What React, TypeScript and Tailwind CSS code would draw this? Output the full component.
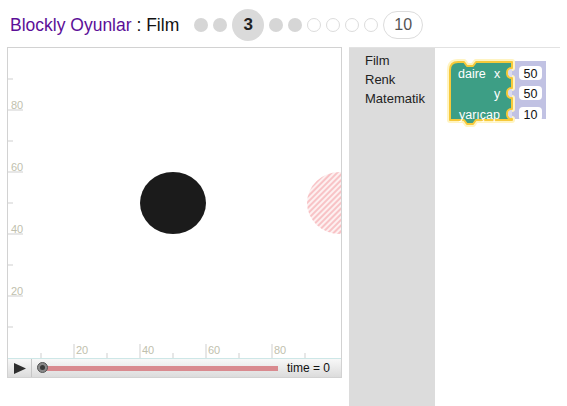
import React from 'react'

const W = 333
const H = 310
const ux = (v: number) => v * 3.3
const uy = (v: number) => H - v * 3.1
const ticks = [10, 20, 30, 40, 50, 60, 70, 80, 90]

// sol üstteki seviye noktaları
function LevelDots() {
  const dot = 'w-[14px] h-[14px] rounded-full'
  return (
    <div className="flex items-center gap-[5px] ml-[15px]">
      <span className={`${dot} bg-[#d6d6d6]`} />
      <span className={`${dot} bg-[#d6d6d6]`} />
      <span className="w-[32px] h-[32px] rounded-full bg-[#dadada] flex items-center justify-center text-[17px] font-bold text-[#222]">
        3
      </span>
      <span className={`${dot} bg-[#d6d6d6]`} />
      <span className={`${dot} bg-[#d6d6d6]`} />
      <span className={`${dot} border border-[#dcdcdc]`} />
      <span className={`${dot} border border-[#dcdcdc]`} />
      <span className={`${dot} border border-[#dcdcdc]`} />
      <span className={`${dot} border border-[#dcdcdc]`} />
      <span className="w-[40px] h-[28px] rounded-full border border-[#dcdcdc] flex items-center justify-center text-[16px] text-[#555]">
        10
      </span>
    </div>
  )
}

function Canvas() {
  return (
    <svg width={W} height={H} className="block overflow-hidden">
      <defs>
        <pattern id="hatch" width="4" height="4" patternUnits="userSpaceOnUse" patternTransform="rotate(45)">
          <rect width="4" height="4" fill="#fdf0f0" />
          <rect width="2" height="4" fill="#f8c3c6" />
        </pattern>
      </defs>
      {/* hedef daire */}
      <ellipse cx={332} cy={155} rx={33} ry={31} fill="url(#hatch)" />
      {/* y ekseni */}
      {ticks.map((v) =>
        v % 20 === 0 ? (
          <g key={'y' + v}>
            <line x1={0} x2={15} y1={uy(v)} y2={uy(v)} stroke="#cfcfcf" strokeWidth={1} />
            <text x={3} y={uy(v) - 1} fontSize={11} fill="#bfbfae" fontFamily="Liberation Sans, Arial, sans-serif">
              {v}
            </text>
          </g>
        ) : (
          <line key={'y' + v} x1={0} x2={5} y1={uy(v)} y2={uy(v)} stroke="#cfcfcf" strokeWidth={1} />
        )
      )}
      {/* x ekseni */}
      {ticks.map((v) =>
        v % 20 === 0 ? (
          <g key={'x' + v}>
            <line x1={ux(v)} x2={ux(v)} y1={H} y2={H - 14} stroke="#cfcfcf" strokeWidth={1} />
            <text x={ux(v) + 2} y={H - 4} fontSize={11} fill="#bfbfae" fontFamily="Liberation Sans, Arial, sans-serif">
              {v}
            </text>
          </g>
        ) : (
          <line key={'x' + v} x1={ux(v)} x2={ux(v)} y1={H} y2={H - 5} stroke="#cfcfcf" strokeWidth={1} />
        )
      )}
      <ellipse cx={ux(50)} cy={uy(50)} rx={33} ry={31} fill="#1b1b1b" />
    </svg>
  )
}

function Scrubber() {
  return (
    <div className="flex h-[19px] border-t border-[#cde7e7] bg-gradient-to-b from-[#f8f8f8] to-[#dcdcdc]">
      <div className="w-[24px] border-r border-[#c6c6c6] flex items-center justify-center">
        <svg width="12" height="11" viewBox="0 0 12 11">
          <path d="M0 0 L12 5.5 L0 11 Z" fill="#2e2e2e" />
        </svg>
      </div>
      <div className="relative w-[255px] flex items-center pl-[10px]">
        <div className="w-[236px] h-[5px] bg-[#d98a8f]" />
        <div className="absolute left-[5px] top-[3px] w-[11px] h-[11px] rounded-full bg-[#8a8a8a] border border-[#555] flex items-center justify-center">
          <div className="w-[5px] h-[5px] rounded-full bg-[#3a3a3a]" />
        </div>
      </div>
      <span className="text-[12px] leading-[18px] text-[#111]">time = 0</span>
    </div>
  )
}

function CircleBlock() {
  const rows = [19, 39, 60]
  const body =
    'M6 16 Q6 8 14 8 L20 8 L23 12 L29 12 L32 8 L68 8 ' +
    rows.map((y) => `L68 ${y - 5} Q63 ${y - 5} 63 ${y} Q63 ${y + 5} 68 ${y + 5} `).join('') +
    'L68 66 L32 66 L29 70 L23 70 L20 66 L6 66 Z'
  return (
    <svg width="110" height="78" className="absolute left-[9px] top-[6px]">
      <rect x={66} y={7} width={36} height={58} fill="#c1c2e3" />
      <path d={body} fill="none" stroke="#fff4c2" strokeWidth={6} strokeLinejoin="round" />
      <path d={body} fill="#3d9e85" stroke="#f7c93a" strokeWidth={2} strokeLinejoin="round" />
      {rows.map((y) => (
        <g key={y}>
          <path d={`M68 ${y - 4} Q64 ${y - 4} 64 ${y} Q64 ${y + 4} 68 ${y + 4} Z`} fill="#d9d9ee" />
          <rect x={75} y={y - 7} width={23} height={14} rx={4} fill="#fff" />
        </g>
      ))}
      <g fontFamily="Liberation Sans, Arial, sans-serif" fontSize={12.5}>
        <text x={14} y={24} fill="#fff">daire</text>
        <text x={50} y={24} fill="#fff">x</text>
        <text x={50} y={44} fill="#fff">y</text>
        <text x={15} y={65} fill="#fff">yarıçap</text>
        <text x={86.5} y={23.5} fill="#111" fontSize={12.5} textAnchor="middle">50</text>
        <text x={86.5} y={43.5} fill="#111" fontSize={12.5} textAnchor="middle">50</text>
        <text x={86.5} y={64.5} fill="#111" fontSize={12.5} textAnchor="middle">10</text>
      </g>
    </svg>
  )
}

export default function App() {
  return (
    <div className="w-[567px] h-[406px] overflow-hidden bg-white font-['Liberation_Sans',Arial,sans-serif]">
      <header className="h-[47px] pt-[3px] pl-[10px] flex items-center">
        <h1 className="text-[17.5px] text-[#111] whitespace-nowrap">
          <span className="text-[#5c0f98]">Blockly Oyunlar</span> : Film
        </h1>
        <LevelDots />
      </header>

      <div className="flex">
        <div className="ml-[7px] w-[335px] h-[331px] border border-[#d2d2d2] flex flex-col">
          <Canvas />
          <Scrubber />
        </div>

        <div className="ml-[7px] w-[211px] h-[359px] border-t border-[#e2e2e2] flex">
          <div className="w-[86px] bg-[#dcdcdc] pt-[3px] pl-[16px] text-[13px] leading-[19px] text-[#222]">
            <div>Film</div>
            <div>Renk</div>
            <div>Matematik</div>
          </div>
          <div className="relative flex-1">
            <CircleBlock />
          </div>
        </div>
      </div>
    </div>
  )
}
